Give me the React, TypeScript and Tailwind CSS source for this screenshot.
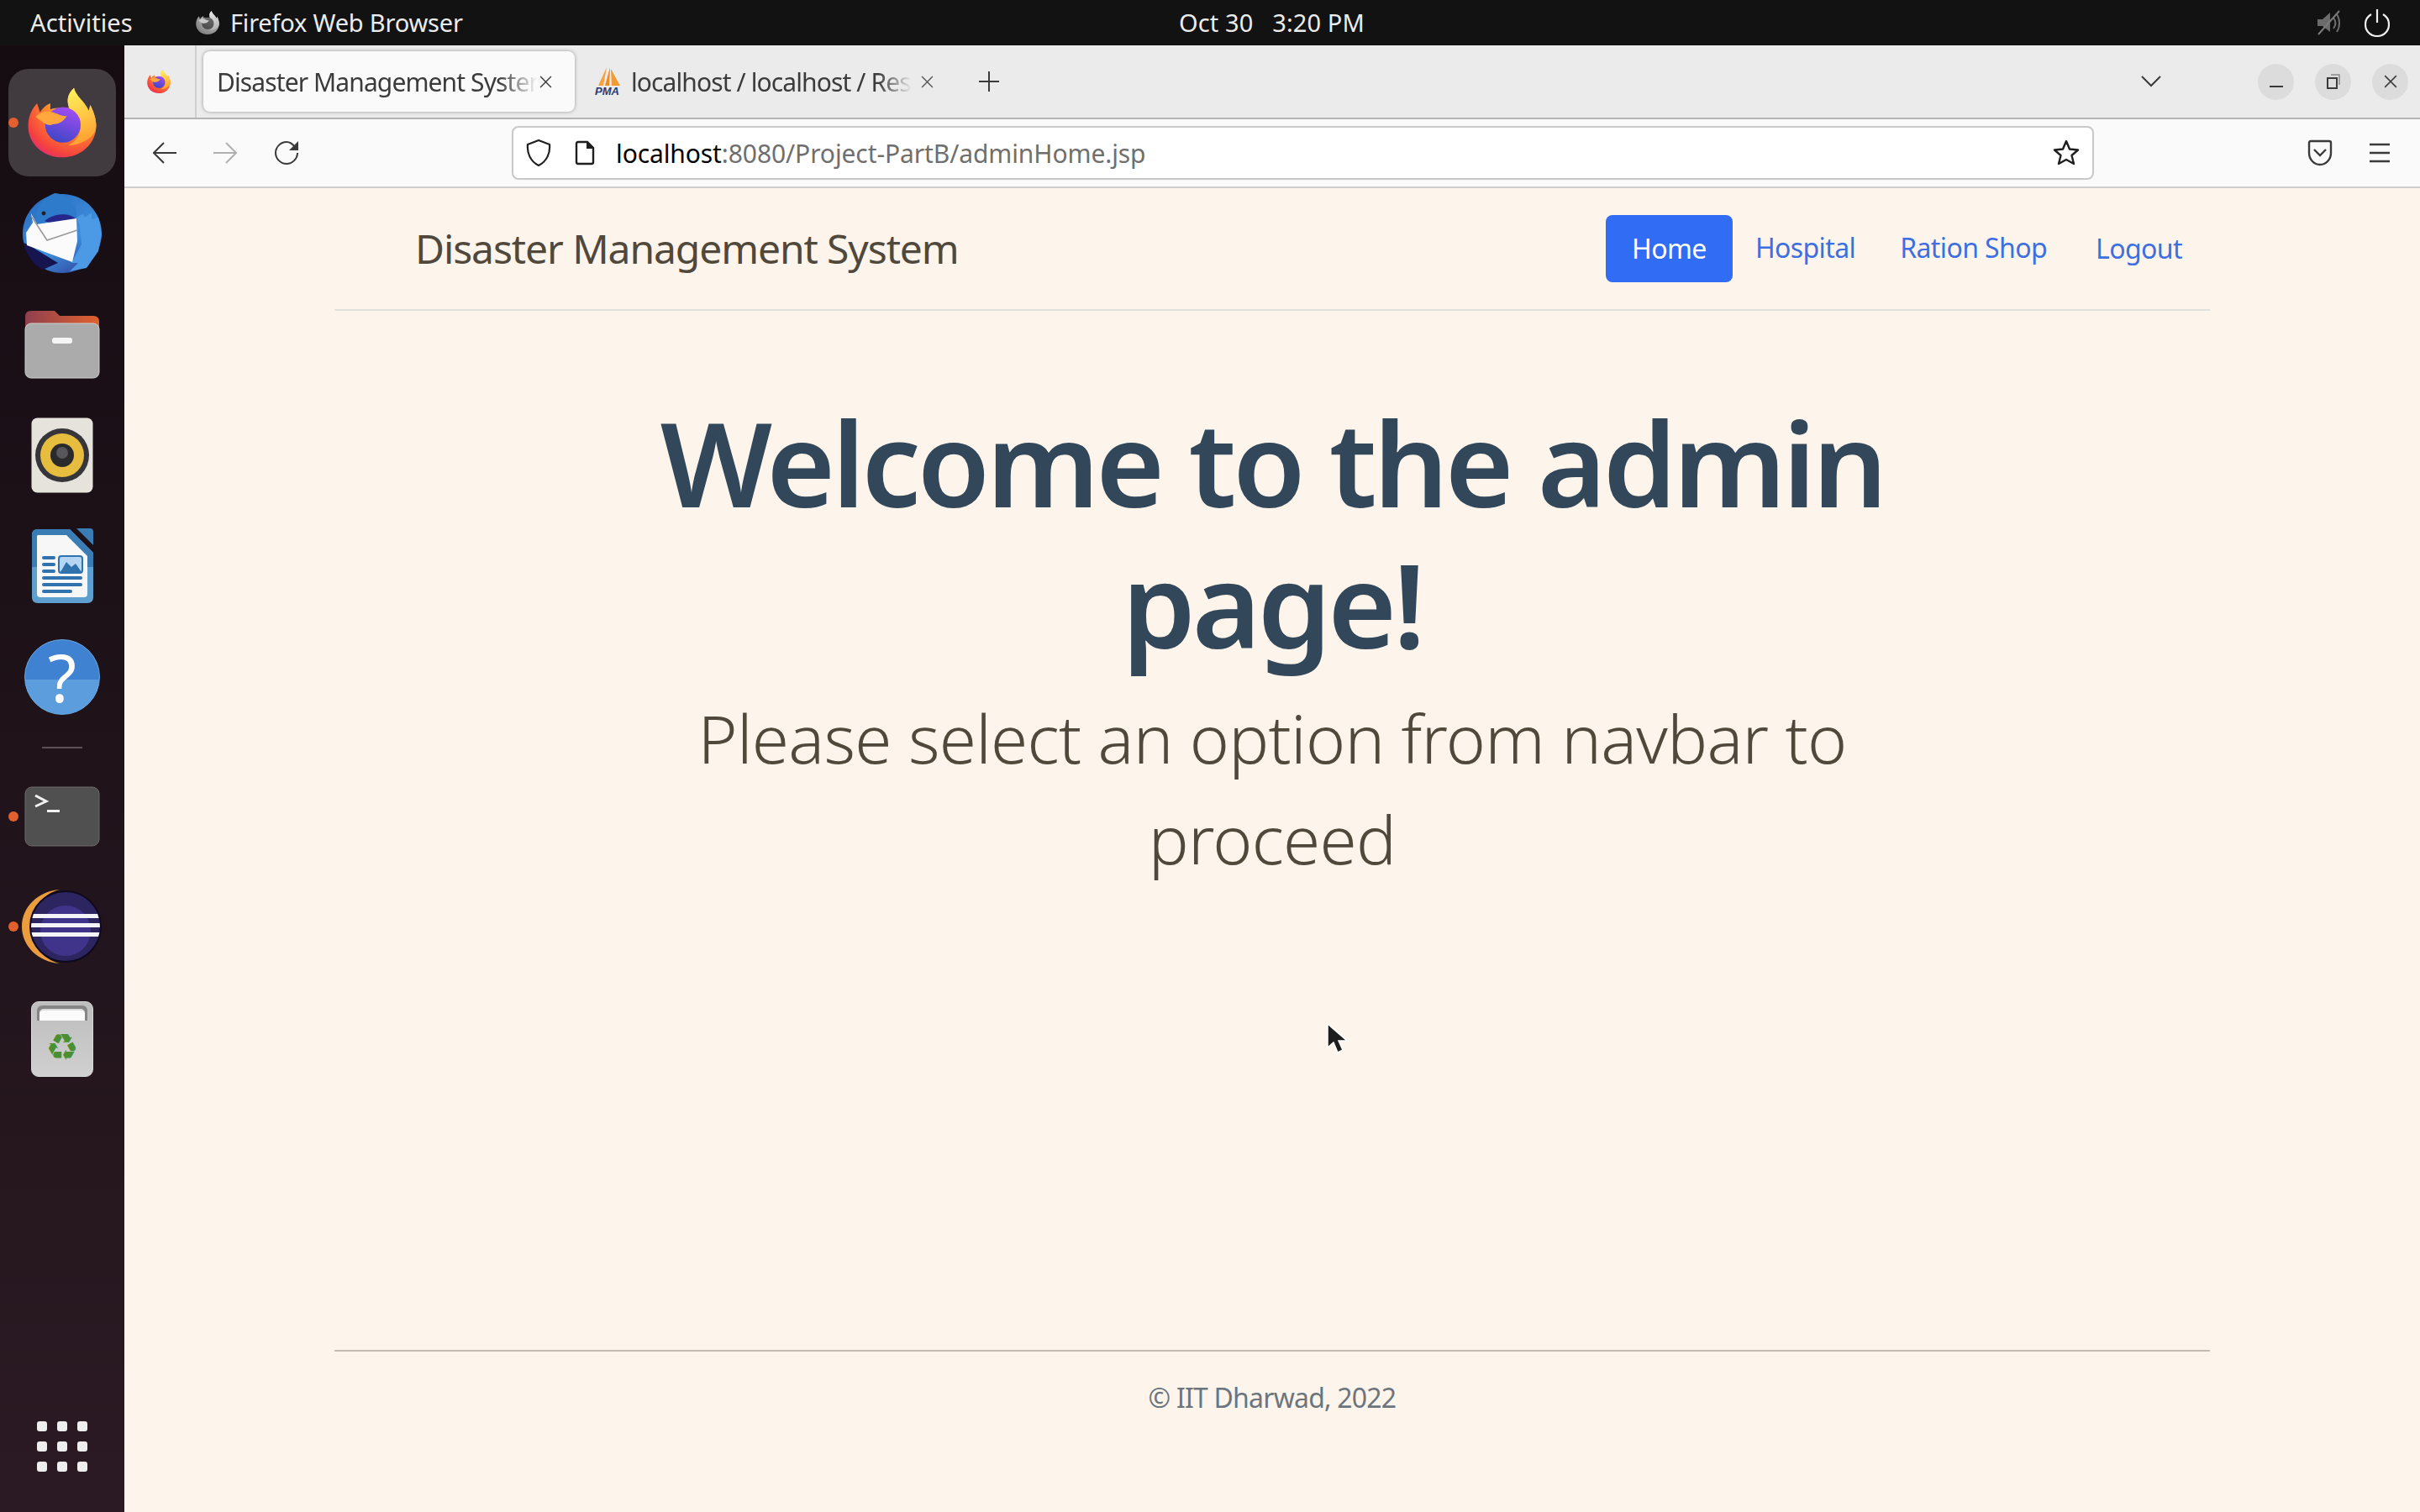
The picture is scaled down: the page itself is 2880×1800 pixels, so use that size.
import React from "react";

function FirefoxLogo({ id, size, gray = false }: { id: string; size: number; gray?: boolean }) {
  return (
    <svg width={size} height={size} viewBox="0 0 100 100">
      <defs>
        <radialGradient id={id + "b"} cx="0.72" cy="0.18" r="1">
          <stop offset="0" stopColor={gray ? "#dddddd" : "#ffe24d"} />
          <stop offset="0.45" stopColor={gray ? "#aaaaaa" : "#ff8a2b"} />
          <stop offset="0.8" stopColor={gray ? "#8a8a8a" : "#f5423f"} />
          <stop offset="1" stopColor={gray ? "#777777" : "#d6218b"} />
        </radialGradient>
        <linearGradient id={id + "f"} x1="0.4" y1="0" x2="0.6" y2="1">
          <stop offset="0" stopColor={gray ? "#e6e6e6" : "#fff05a"} />
          <stop offset="1" stopColor={gray ? "#b0b0b0" : "#ff9b2e"} />
        </linearGradient>
        <linearGradient id={id + "p"} x1="0.7" y1="0" x2="0.3" y2="1">
          <stop offset="0" stopColor={gray ? "#6a6a6a" : "#a44cf5"} />
          <stop offset="1" stopColor={gray ? "#4a4a4a" : "#3b46c4"} />
        </linearGradient>
      </defs>
      <path
        d="M50 97C24 97 4 78 4 55C4 43 8 33 16 24L20 36C24 30 28 26 34 24L34 32C38 30 44 30 50 30L60 30C56 22 56 12 66 3C68 14 80 20 86 34L88 26C93 36 96 46 96 54C96 78 76 97 50 97Z"
        fill={`url(#${id}b)`}
      />
      <path
        d="M66 3C56 12 56 22 60 32C72 36 78 48 74 62C72 72 64 78 58 81C76 80 96 70 96 54C96 46 93 36 88 26L86 34C80 20 68 14 66 3Z"
        fill={`url(#${id}f)`}
      />
      <circle cx="51" cy="53" r="24" fill={`url(#${id}p)`} />
      <path
        d="M14 42C22 34 30 34 38 36C44 38 50 42 56 41C54 46 46 53 38 52C32 56 24 50 14 42Z"
        fill={gray ? "#c9c9c9" : "#ffa63d"}
      />
    </svg>
  );
}

function Thunderbird() {
  return (
    <svg width="98" height="98" viewBox="0 0 98 98">
      <defs>
        <linearGradient id="tb" x1="0.2" y1="0" x2="0.8" y2="1">
          <stop offset="0" stopColor="#2a6cc0" />
          <stop offset="0.6" stopColor="#3f8fdc" />
          <stop offset="1" stopColor="#2f479f" />
        </linearGradient>
      </defs>
      <circle cx="49" cy="49" r="47" fill="url(#tb)" />
      <path d="M3 60C6 74 14 86 26 92L44 84L8 62Z" fill="#16154f" />
      <path d="M19 38C16 22 22 8 40 1C56 2 68 16 66 31L40 36Z" fill="#2f7bcb" />
      <path d="M28 34C40 24 58 24 66 32L40 38Z" fill="#25268a" />
      <path d="M66 30L74 26L76 30L84 24L84 32L92 30L96 50L92 70L78 90L58 94L68 84L60 84L72 62L70 40Z" fill="#4c9ae6" />
      <path d="M12 25L19 38L66 31L67 58L61 83L7 63L6 48L14 36Z" fill="#fbfbfb" />
      <path d="M12 28L31 57L67 45" stroke="#9a9a9a" strokeWidth="1.6" fill="none" />
      <circle cx="27" cy="25" r="2.4" fill="#222" />
    </svg>
  );
}

function Files() {
  return (
    <svg width="90" height="82" viewBox="0 0 90 82">
      <defs>
        <linearGradient id="fh" x1="0" y1="0" x2="1" y2="0">
          <stop offset="0" stopColor="#8f3f4f" />
          <stop offset="1" stopColor="#e0622f" />
        </linearGradient>
      </defs>
      <path d="M1 8Q1 1 8 1H36L42 7H82Q89 7 89 14V30H1Z" fill="url(#fh)" />
      <rect x="1" y="16" width="88" height="65" rx="7" fill="#ababab" stroke="#cfcfcf" strokeWidth="1" />
      <rect x="33" y="33" width="24" height="7" rx="3" fill="#f5f5f5" />
    </svg>
  );
}

function Rhythmbox() {
  return (
    <svg width="74" height="90" viewBox="0 0 74 90">
      <rect x="0.5" y="0.5" width="73" height="89" rx="7" fill="#e6e3dc" />
      <circle cx="37" cy="45" r="32" fill="#35353a" />
      <circle cx="37" cy="45" r="26" fill="#e6bd3f" />
      <circle cx="37" cy="45" r="14" fill="#2a2a2c" />
      <circle cx="37" cy="42" r="7" fill="#57565a" />
    </svg>
  );
}

function Writer() {
  return (
    <svg width="74" height="90" viewBox="0 0 74 90">
      <path d="M8 1H46L74 29V82Q74 89 67 89H8Q1 89 1 82V8Q1 1 8 1Z" fill="#5f9fcf" />
      <path d="M8 1H46L74 29V46H1V8Q1 1 8 1Z" fill="#3a7db5" />
      <path d="M8 8H42L67 33V78Q67 82 63 82H11Q7 82 7 78V9Z" fill="#f7f7f7" />
      <path d="M54 0H70Q74 0 74 4V20Z" fill="#3a7db5" />
      <rect x="13" y="33" width="16" height="4" rx="2" fill="#2f72ad" />
      <rect x="13" y="41" width="16" height="4" rx="2" fill="#2f72ad" />
      <rect x="13" y="49" width="16" height="4" rx="2" fill="#2f72ad" />
      <rect x="33" y="33" width="28" height="20" rx="3" fill="#b5d6f2" stroke="#2f72ad" strokeWidth="2" />
      <path d="M35 52L42 40L48 46L53 42L60 52Z" fill="#2f72ad" />
      <rect x="13" y="57" width="48" height="4" rx="2" fill="#2f72ad" />
      <rect x="13" y="65" width="48" height="4" rx="2" fill="#2f72ad" />
      <rect x="13" y="73" width="36" height="4" rx="2" fill="#2f72ad" />
    </svg>
  );
}

function Help() {
  return (
    <div className="relative flex h-[90px] w-[90px] items-center justify-center overflow-hidden rounded-full border border-[#6aa9e2] bg-[linear-gradient(to_bottom,#3f82d2_0%,#3f82d2_53%,#5b9ddd_53%,#5b9ddd_100%)]">
      <span className="text-[78px] font-normal leading-none text-white">?</span>
    </div>
  );
}

function Terminal() {
  return (
    <svg width="90" height="72" viewBox="0 0 90 72">
      <rect x="1" y="1" width="88" height="70" rx="8" fill="#505050" stroke="#6a6a6a" />
      <path d="M13 11L26 18L13 24" stroke="#f2f2f2" strokeWidth="3" fill="none" />
      <rect x="27" y="28" width="15" height="3" fill="#f2f2f2" />
    </svg>
  );
}

function Eclipse() {
  return (
    <svg width="98" height="90" viewBox="0 0 98 90">
      <defs>
        <clipPath id="ec">
          <circle cx="53" cy="45" r="41" />
        </clipPath>
      </defs>
      <path d="M46 1C20 3 1 22 1 45C1 68 20 87 46 89C26 84 12 66 12 45C12 24 26 6 46 1Z" fill="#eb9c3e" />
      <circle cx="53" cy="45" r="42" fill="#2d2560" stroke="#0c0a1c" strokeWidth="2" />
      <circle cx="53" cy="50" r="30" fill="#40348a" clipPath="url(#ec)" />
      <g clipPath="url(#ec)">
        <rect x="8" y="30" width="90" height="5" fill="#f4f3f8" />
        <rect x="8" y="41" width="90" height="5" fill="#f4f3f8" />
        <rect x="8" y="52" width="90" height="5" fill="#f4f3f8" />
      </g>
    </svg>
  );
}

function Trash() {
  return (
    <div className="relative flex h-[90px] w-[74px] flex-col items-center rounded-[9px] border border-[#d8d8d8] bg-[linear-gradient(to_bottom,#bdbdbd,#d0d0d0)]">
      <div className="mt-[4px] flex h-[18px] w-[60px] items-end justify-center rounded-t-[6px] bg-[#858585]">
        <div className="h-[14px] w-[54px] rounded-t-[5px] border-t-2 border-[#dcdcdc] bg-[#fbfbfb]" />
      </div>
      <span className="mt-[10px] font-['DejaVu_Sans',sans-serif] text-[44px] leading-none text-[#4a8f32]">♻</span>
    </div>
  );
}

function Dot() {
  return <div className="absolute left-[10px] top-1/2 h-[12px] w-[12px] -translate-y-1/2 rounded-full bg-[#e2602e]" />;
}

function Dock() {
  return (
    <aside className="flex h-full w-[148px] shrink-0 flex-col items-center bg-[linear-gradient(to_bottom,#150c12,#2b1a23)] pt-[28px]">
      <div className="relative flex h-[128px] w-[128px] items-center justify-center rounded-[24px] bg-[#413a3f]">
        <div className="absolute left-0 top-1/2 h-[12px] w-[12px] -translate-y-1/2 rounded-full bg-[#e2602e]" />
        <FirefoxLogo id="dock" size={88} />
      </div>
      <div className="mt-[19px]">
        <Thunderbird />
      </div>
      <div className="mt-[42px]">
        <Files />
      </div>
      <div className="mt-[46px]">
        <Rhythmbox />
      </div>
      <div className="mt-[42px]">
        <Writer />
      </div>
      <div className="mt-[42px]">
        <Help />
      </div>
      <div className="mt-[38px] h-[2px] w-[48px] bg-[#5b5157]" />
      <div className="relative mt-[45px] flex w-full justify-center">
        <Dot />
        <Terminal />
      </div>
      <div className="relative mt-[50px] flex w-full justify-center">
        <Dot />
        <Eclipse />
      </div>
      <div className="mt-[44px]">
        <Trash />
      </div>
      <div className="mt-auto mb-[48px] grid grid-cols-3 gap-[12px]">
        {[0, 1, 2, 3, 4, 5, 6, 7, 8].map((i) => (
          <div key={i} className="h-[12px] w-[12px] rounded-[3px] bg-[#eeeeee]" />
        ))}
      </div>
    </aside>
  );
}

function TopBar() {
  return (
    <header className="flex h-[54px] shrink-0 items-center bg-[#121212] text-[29px] text-[#ececec]">
      <span className="ml-[36px] w-[196px] tracking-[0.1px]">Activities</span>
      <FirefoxLogo id="top" size={30} gray />
      <span className="ml-[12px] tracking-[-0.2px]">Firefox Web Browser</span>
      <span className="absolute left-[1403px] whitespace-pre tracking-[0.1px]">Oct 30   3:20 PM</span>
      <div className="ml-auto mr-[36px] flex items-center gap-[28px]">
        <svg width="30" height="30" viewBox="0 0 30 30" fill="none">
          <path d="M2 11H8L17 3V26L8 19H2Z" fill="#6b6b6b" />
          <path d="M21 9C24 13 24 18 21 22M25 5C29 11 29 20 25 26" stroke="#6b6b6b" strokeWidth="2" />
          <path d="M3 29L28 1" stroke="#7a7a7a" strokeWidth="2" />
        </svg>
        <svg width="30" height="34" viewBox="0 0 30 34" fill="none" stroke="#f0f0f0" strokeWidth="2.2">
          <path d="M15 1V17" />
          <path d="M8 7C3 10 1 14 1 19C1 27 7 33 15 33C23 33 29 27 29 19C29 14 27 10 22 7" />
        </svg>
      </div>
    </header>
  );
}

function CloseX({ size = 15, color = "#3a3a3a" }: { size?: number; color?: string }) {
  return (
    <svg width={size} height={size} viewBox="0 0 14 14" fill="none" stroke={color} strokeWidth="1.3">
      <path d="M1 1L13 13M13 1L1 13" />
    </svg>
  );
}

function TabBar() {
  return (
    <div className="flex h-[88px] shrink-0 items-center border-b-2 border-[#b4b4b4] bg-[#ebebeb] text-[30px] text-[#3b3b3b]">
      <div className="flex h-full w-[86px] items-center justify-center border-r-2 border-[#cfcfcf] pr-[3px]">
        <FirefoxLogo id="tab" size={30} />
      </div>
      <div className="ml-[8px] flex h-[72px] w-[442px] items-center rounded-[8px] bg-[#fafafa] pl-[16px] pr-[15px] shadow-[0_0_4px_rgba(0,0,0,0.35)]">
        <span className="w-[382px] overflow-hidden whitespace-nowrap tracking-[-0.9px] [mask-image:linear-gradient(to_right,black_88%,transparent)]">
          Disaster Management System
        </span>
        <span className="ml-[2px]">
          <CloseX />
        </span>
      </div>
      <div className="ml-[24px] flex w-[404px] items-center">
        <svg width="32" height="34" viewBox="0 0 32 34">
          <path d="M14 0L4 22H10Z" fill="#f6a243" />
          <path d="M18 0L12 22H17Z" fill="#ee8b22" />
          <path d="M19 2L30 22H20Z" fill="#f29a33" />
          <text x="0" y="33" fontSize="13" fontStyle="italic" fontWeight="700" fill="#2a3a72" fontFamily="Liberation Sans, sans-serif">
            PMA
          </text>
        </svg>
        <span className="ml-[11px] w-[334px] overflow-hidden whitespace-nowrap tracking-[-0.9px] [mask-image:linear-gradient(to_right,black_88%,transparent)]">
          localhost / localhost / Resources
        </span>
        <span className="ml-[11px]">
          <CloseX color="#555555" />
        </span>
      </div>
      <svg className="ml-[53px]" width="24" height="24" viewBox="0 0 24 24" stroke="#3a3a3a" strokeWidth="2">
        <path d="M12 0V24M0 12H24" />
      </svg>
      <svg className="ml-[1359px]" width="24" height="14" viewBox="0 0 24 14" fill="none" stroke="#3a3a3a" strokeWidth="2">
        <path d="M1 1L12 12L23 1" />
      </svg>
      <div className="ml-[115px] flex items-center gap-[25px]">
        <div className="flex h-[43px] w-[43px] items-center justify-center rounded-full bg-[#dcdcdc]">
          <div className="mt-[12px] h-[2px] w-[16px] bg-[#3a3a3a]" />
        </div>
        <div className="flex h-[43px] w-[43px] items-center justify-center rounded-full bg-[#dcdcdc]">
          <svg width="16" height="18" viewBox="0 0 16 18" fill="none">
            <rect x="1" y="5" width="11" height="12" stroke="#3a3a3a" strokeWidth="2" />
            <path d="M5 1H15V13" stroke="#8a8a8a" strokeWidth="1.5" />
          </svg>
        </div>
        <div className="flex h-[43px] w-[43px] items-center justify-center rounded-full bg-[#dcdcdc]">
          <CloseX size={16} />
        </div>
      </div>
    </div>
  );
}

function ToolBar() {
  return (
    <div className="flex h-[82px] shrink-0 items-center border-b-2 border-[#cdcdcd] bg-[#fafafa]">
      <svg className="ml-[34px]" width="28" height="26" viewBox="0 0 28 26" fill="none" stroke="#3a3a3a" strokeWidth="2">
        <path d="M28 13H2M13 1L1 13L13 25" />
      </svg>
      <svg className="ml-[44px]" width="28" height="26" viewBox="0 0 28 26" fill="none" stroke="#b0b0b0" strokeWidth="2">
        <path d="M0 13H26M15 1L27 13L15 25" />
      </svg>
      <svg className="ml-[44px]" width="30" height="30" viewBox="0 0 30 30" fill="none">
        <path d="M25 8C22 4 18 2 15 2C8 2 2 8 2 15C2 22 8 28 15 28C22 28 28 22 28 15" stroke="#3a3a3a" strokeWidth="2" />
        <path d="M29 1V12H18Z" fill="#3a3a3a" />
      </svg>
      <div className="ml-[253px] flex h-[64px] w-[1883px] items-center rounded-[8px] border-2 border-[#c8c8c8] bg-white pl-[15px] pr-[15px]">
        <svg width="30" height="32" viewBox="0 0 30 32" fill="none" stroke="#1f1f1f" strokeWidth="2.2">
          <path d="M15 1L28 6C29 16 25 26 15 31C5 26 1 16 2 6Z" />
        </svg>
        <svg className="ml-[28px]" width="24" height="30" viewBox="0 0 24 30">
          <path d="M4 2H15L22 9V26Q22 28 20 28H4Q2 28 2 26V4Q2 2 4 2Z" fill="none" stroke="#1f1f1f" strokeWidth="2.4" />
          <path d="M14 1L23 10H14Z" fill="#1f1f1f" />
        </svg>
        <span className="ml-[25px] text-[30px] tracking-[-0.1px] text-black">
          localhost<span className="text-[#6f6f6f]">:8080/Project-PartB/adminHome.jsp</span>
        </span>
        <svg className="ml-auto" width="32" height="32" viewBox="0 0 32 32" fill="none" stroke="#1f1f1f" strokeWidth="2.4" strokeLinejoin="round">
          <path d="M16 2L20 11.5L30 12.5L22.5 19L25 29L16 24L7 29L9.5 19L2 12.5L12 11.5Z" />
        </svg>
      </div>
      <svg className="ml-[254px]" width="30" height="32" viewBox="0 0 30 32" fill="none" stroke="#3a3a3a" strokeWidth="2.4">
        <path d="M4 2H26Q28 2 28 4V16C28 24 22 30 15 30C8 30 2 24 2 16V4Q2 2 4 2Z" />
        <path d="M8 12L15 19L22 12" />
      </svg>
      <svg className="ml-[43px]" width="26" height="24" viewBox="0 0 26 24" stroke="#3a3a3a" strokeWidth="2.4">
        <path d="M1 2H25M1 12H25M1 22H25" />
      </svg>
    </div>
  );
}

function Page() {
  return (
    <main className="relative flex min-h-0 flex-1 flex-col items-center bg-[#fdf5ec]">
      <div className="flex w-[2232px] flex-1 flex-col">
        <nav className="flex h-[146px] items-center border-b-2 border-[#e3e1de]">
          <span className="ml-[96px] text-[48px] tracking-[-1.1px] text-[#51483c]">Disaster Management System</span>
          <ul className="ml-auto mr-[33px] flex items-center text-[32px] tracking-[-0.6px] text-[#3d6fe0]">
            <li className="flex h-[80px] w-[151px] items-center justify-center rounded-[8px] bg-[#316cf4] text-white">Home</li>
            <li className="ml-[27px] -mt-[2px]">Hospital</li>
            <li className="ml-[53px] -mt-[2px]">Ration Shop</li>
            <li className="ml-[58px]">Logout</li>
          </ul>
        </nav>
        <div className="mx-auto mt-[96px] w-[1600px] text-center">
          <h1 className="text-[140px] font-semibold leading-[168px] tracking-[-4.1px] text-[#32475a]">Welcome to the admin page!</h1>
          <p className="mx-auto mt-[16px] w-[1500px] text-[80px] font-light leading-[120px] tracking-[-0.7px] text-[#51483c]">Please select an option from navbar to proceed</p>
        </div>
        <footer className="mt-auto mb-[112px] border-t-2 border-[#c4bcb4] pt-[31px] text-center text-[32px] leading-[48px] tracking-[-0.8px] text-[#6c757d]">
          © IIT Dharwad, 2022
        </footer>
      </div>
      <svg className="absolute left-[1431px] top-[994px]" width="26" height="38" viewBox="0 0 26 38">
        <path d="M1 1V29L8 23L13 35L19 32L14 21H24Z" fill="#1e1e1e" stroke="#ffffff" strokeWidth="1.5" />
      </svg>
    </main>
  );
}

export default function App() {
  return (
    <div className="relative flex h-[1800px] w-[2880px] flex-col overflow-hidden font-['Noto_Sans','Liberation_Sans',sans-serif]">
      <TopBar />
      <div className="flex min-h-0 flex-1">
        <Dock />
        <div className="flex min-w-0 flex-1 flex-col">
          <TabBar />
          <ToolBar />
          <Page />
        </div>
      </div>
    </div>
  );
}
